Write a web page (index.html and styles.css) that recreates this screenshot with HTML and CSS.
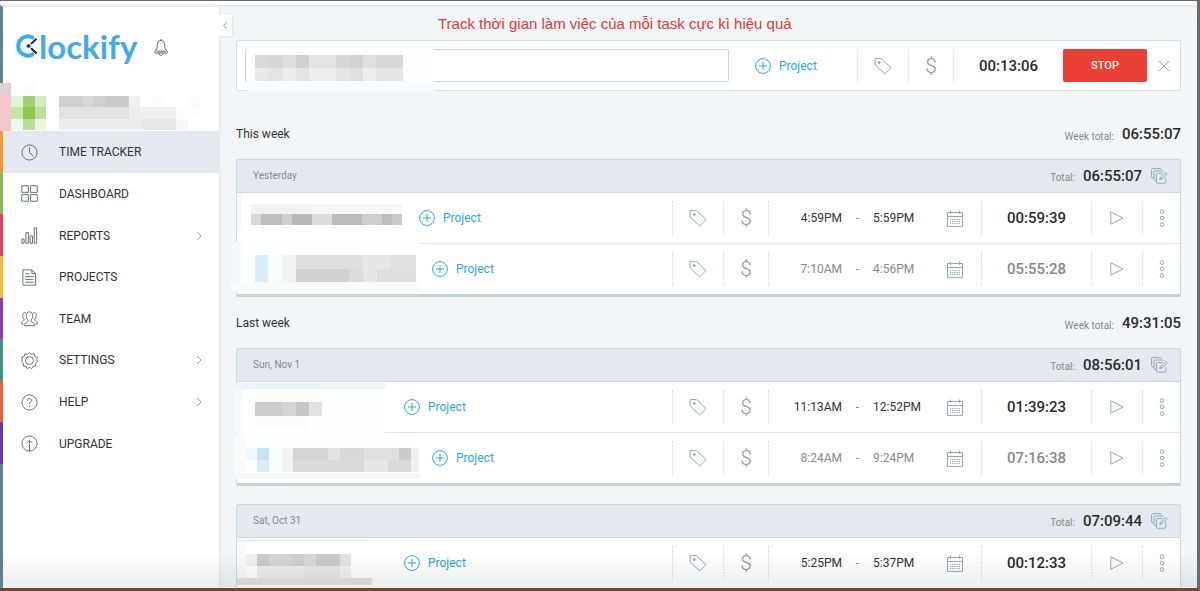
FILE: index.html
```html
<!DOCTYPE html>
<html lang="vi">
<head>
  <meta charset="UTF-8">
  <title>Clockify - Time Tracker</title>
  <link rel="stylesheet" href="styles.css">
</head>
<body>
<!-- icons -->
<svg class="sprite" aria-hidden="true">
  <symbol id="i-plus" viewBox="0 0 16 16"><circle cx="8" cy="8" r="7.4"/><path d="M8 4v8M4 8h8"/></symbol>
  <symbol id="i-tag" viewBox="0 0 18 18"><path d="M1 1.6h6.6l9.4 9-6.3 6.2L1.2 8z"/><circle cx="5.2" cy="5.6" r="1" fill="currentColor"/></symbol>
  <symbol id="i-cal" viewBox="0 0 16 17"><path d="M.5 2.5h15v13.9H.5zM.5 6.5h15M3.5.5v3.4M12.5.5v3.4"/><path d="M3 9.5h10M3 11.5h10M3 13.5h10" stroke-dasharray="1.2 1"/></symbol>
  <symbol id="i-play" viewBox="0 0 14 14"><path d="M.8.8 13 7 .8 13.2z"/></symbol>
  <symbol id="i-dots" viewBox="0 0 6 18"><circle cx="3" cy="2.6" r="1.8"/><circle cx="3" cy="9" r="1.8"/><circle cx="3" cy="15.6" r="1.8"/></symbol>
  <symbol id="i-copy" viewBox="0 0 17 16"><path d="M3 9.8H1.6a1 1 0 0 1-1-1V1.6a1 1 0 0 1 1-1H9a1 1 0 0 1 1 1M5.4 12.4H4a1 1 0 0 1-1-1V4a1 1 0 0 1 1-1h7.4a1 1 0 0 1 1 1M11.5 5.6H6.4a1 1 0 0 0-1 1v7.6a1 1 0 0 0 1 1h7.4a1 1 0 0 0 1-1V9.4M8.8 11.6l.5-2 5.4-5.3 1.5 1.5-5.4 5.3zM8.8 11.6l2-2"/></symbol>
  <symbol id="i-right" viewBox="0 0 6 10"><path d="M1 1l4 4-4 4"/></symbol>
</svg>

<div class="window">
  <aside class="sidebar">
    <div class="brand">
      <a class="logo" href="#" aria-label="Clockify">
        <svg width="22" height="24" viewBox="0 0 22 24" aria-hidden="true">
          <path class="ring" d="M15.5 3.6A9.6 9.6 0 1 0 15.5 20.4"/>
          <path class="hands" d="M14.6 9.4 19 5.2M14.6 14.8 19 19"/><circle cx="11.6" cy="12" r="1.9" fill="#222"/>
        </svg><span>lockify</span>
      </a>
      <button class="bell" aria-label="Notifications">
        <svg width="14" height="18" viewBox="0 0 14 18"><path d="M7 1.2c-2.6.5-3.6 2.500-3.700 5.300-.1 2.800-.8 4.500-2.400 5.700-.5.500-.3 1.800.4 1.800h11.400c.7 0 .9-1.300.4-1.800-1.600-1.200-2.300-2.900-2.400-5.700C10.600 3.700 9.600 1.700 7 1.200zM7 0v1.200M2.500 12.200h9M5 14.300c.2 3 3.800 3 4 0"/></svg>
      </button>
    </div>
    <!-- account, hidden -->
    <svg class="user" height="48" shape-rendering="crispEdges" aria-hidden="true">
      <rect width="11" height="13" fill="#decfd1"/><rect y="13" width="11" height="35" fill="#f2c6cb"/>
      <rect x="23" y="1" width="12" height="11" fill="#fbfbfa"/>
      <rect x="11" y="13" width="12" height="11" fill="#def4d3"/><rect x="23" y="13" width="12" height="11" fill="#a3cf70"/><rect x="35" y="13" width="11" height="11" fill="#d6ebc3"/>
      <rect x="11" y="24" width="12" height="12" fill="#c5e5a8"/><rect x="23" y="24" width="12" height="12" fill="#8fc654"/><rect x="35" y="24" width="11" height="12" fill="#bfdf9d"/>
      <rect x="11" y="36" width="12" height="11" fill="#eef8e9"/><rect x="23" y="36" width="12" height="11" fill="#b9dc98"/><rect x="35" y="36" width="11" height="11" fill="#eaf5e3"/>
      <rect x="59" y="13" width="70" height="11" fill="#d0d0d0"/><rect x="82" y="13" width="12" height="11" fill="#d7d7d7"/><rect x="105" y="13" width="23" height="11" fill="#cacaca"/><rect x="129" y="13" width="11" height="11" fill="#efefed"/>
      <rect x="59" y="24" width="70" height="12" fill="#e2e2e2"/><rect x="129" y="24" width="11" height="12" fill="#eeeeec"/><rect x="140" y="24" width="36" height="12" fill="#f0f0f0"/><rect x="176" y="24" width="26" height="11" fill="#fbfcfb"/>
      <rect x="59" y="36" width="82" height="11" fill="#ededec"/><rect x="141" y="36" width="35" height="11" fill="#e8e8e8"/><rect x="176" y="36" width="12" height="11" fill="#f8f8f8"/>
      <rect x="188" y="13" width="12" height="11" fill="#fafbfa"/><rect x="152" y="13" width="12" height="11" fill="#fafbfb"/>
    </svg>
    <nav>
      <ul class="menu">
        <li class="active c1"><a href="#"><svg viewBox="0 0 18 18"><circle cx="9" cy="9" r="8"/><path d="M9 3.500V9l4 4"/></svg>TIME TRACKER</a></li>
        <li class="c2"><a href="#"><svg viewBox="0 0 18 18"><path d="M.8.8h7v7h-7zM10.200.8h7v7h-7zM.8 10.200h7v7h-7zM10.200 10.200h7v7h-7z"/></svg>DASHBOARD</a></li>
        <li class="c3"><a href="#"><svg viewBox="0 0 18 18"><path d="M.9 12.700h2.400v4.500H.9zM5.200 6h2.600v11.200H5.200zM9.600 9.500h2.600v7.700H9.600zM14 .9h2.600v16.300H14z"/></svg>REPORTS<svg class="go"><use href="#i-right"/></svg></a></li>
        <li class="c4"><a href="#"><svg viewBox="0 0 18 18"><path d="M2 .9h9.500l4 4v12.200H2zM11.500.9v4h4M4.500 5h4.500M4.500 8h9M4.500 11h9M4.500 14h9"/></svg>PROJECTS</a></li>
        <li class="c5"><a href="#"><svg viewBox="0 0 18 18"><path d="M9 2C4.500 2 5 8.500 7.400 10.800c.3 1.400-.4 2.200-2 2.700-1.600.6-2 1.600-2 3.100h11.200c0-1.500-.4-2.500-2-3.100-1.600-.5-2.300-1.300-2-2.700C13 8.500 13.500 2 9 2zM5 2.800C1.200 2 .8 6.500 3.300 9.500c.2 1.500-.4 2-1.300 2.500-1 .5-1.400 1.300-1.400 2.800h2M13 2.800c3.800-.8 4.200 3.700 1.700 6.700-.2 1.500.4 2 1.300 2.500 1 .5 1.400 1.300 1.400 2.800h-2"/></svg>TEAM</a></li>
        <li class="c6"><a href="#"><svg viewBox="0 0 18 18"><circle cx="9" cy="9" r="4.200"/><path d="M9 .7l2 1.900 2.800-.7.8 2.800 2.700.9-.7 2.700L17.400 10l-2 2 .3 2.800-2.800.3-1.300 2.400L9 16.300l-2.600 1.200-1.300-2.400-2.800-.3.300-2.800-2-2 .8-1.700L.7 5.600l2.700-.9.800-2.800L7 2.600z"/></svg>SETTINGS<svg class="go"><use href="#i-right"/></svg></a></li>
        <li class="c7"><a href="#"><svg viewBox="0 0 18 18"><circle cx="9" cy="9" r="8"/><path d="M6.900 7c0-3 4.200-2.800 4.200-.2C11.100 8.700 9 8.500 9 10.800M9 12.200v1.200"/></svg>HELP<svg class="go"><use href="#i-right"/></svg></a></li>
        <li class="c8"><a href="#"><svg viewBox="0 0 18 18"><circle cx="9" cy="9" r="8"/><path d="M9 17V6M5.800 8.800 9 5.600l3.200 3.200"/></svg>UPGRADE</a></li>
      </ul>
    </nav>
    <div class="rest"></div>
    <button class="collapse" aria-label="Collapse menu"><svg width="4" height="7" viewBox="0 0 4 7"><path d="M3.500.5l-3 3 3 3"/></svg></button>
  </aside>

  <main>
    <h1>Track thời gian làm việc của mỗi task cực kì hiệu quả</h1>

    <form class="tracker">
      <div class="what">
        <input type="text" aria-label="What are you working on?">
        <svg width="187" height="51" shape-rendering="crispEdges" aria-hidden="true">
          <rect width="187" height="41" fill="#fdfefe"/><rect y="41" width="187" height="10" fill="#f8fbfd"/>
          <rect x="8" y="14" width="13" height="13" fill="#d9d9d9"/><rect x="21" y="14" width="15" height="13" fill="#d6d6d6"/><rect x="36" y="14" width="13" height="13" fill="#dedede"/><rect x="49" y="14" width="13" height="13" fill="#d0d0d0"/><rect x="62" y="14" width="27" height="13" fill="#e4e4e4"/><rect x="89" y="14" width="14" height="13" fill="#d6d6d6"/><rect x="103" y="14" width="13" height="13" fill="#d2d2d2"/><rect x="116" y="14" width="13" height="13" fill="#e0e0e0"/><rect x="129" y="14" width="27" height="13" fill="#d8d8d8"/>
          <rect x="8" y="27" width="13" height="13" fill="#e9e9e9"/><rect x="21" y="27" width="15" height="13" fill="#e3e3e3"/><rect x="36" y="27" width="13" height="13" fill="#ebeeed"/><rect x="49" y="27" width="13" height="13" fill="#e3e3e3"/><rect x="62" y="27" width="27" height="13" fill="#eee"/><rect x="89" y="27" width="14" height="13" fill="#e5e5e5"/><rect x="103" y="27" width="13" height="13" fill="#dfdfdf"/><rect x="116" y="27" width="13" height="13" fill="#ebefee"/><rect x="129" y="27" width="27" height="13" fill="#e4e4e4"/>
        </svg>
      </div>
      <button type="button" class="project"><svg><use href="#i-plus"/></svg>Project</button>
      <button type="button" class="cell tag" aria-label="Tags"><svg><use href="#i-tag"/></svg></button>
      <button type="button" class="cell money" aria-label="Billable">$</button>
      <span class="cell now">00:13:06</span>
      <button type="button" class="stop">STOP</button>
      <button type="button" class="discard" aria-label="Discard"><svg width="12" height="12" viewBox="0 0 12 12"><path d="M1 1l10 10M11 1L1 11"/></svg></button>
    </form>

    <section class="week">
      <div class="week-head"><h2>This week</h2><span>Week total:</span><b>06:55:07</b></div>
      <div class="day">
        <div class="day-head"><h3>Yesterday</h3><span>Total:</span><b>06:55:07</b><button aria-label="Bulk edit"><svg><use href="#i-copy"/></svg></button></div>
        <div class="entry">
          <svg class="desc" width="182" height="50" shape-rendering="crispEdges" aria-hidden="true">
            <rect width="4" height="38" fill="#f5f8fa"/><rect x="14" y="11" width="61" height="10" fill="#f2f2f2"/><rect x="75" y="11" width="90" height="10" fill="#f7f7f7"/>
            <rect x="14" y="21" width="10" height="11" fill="#d8d8d8"/><rect x="24" y="21" width="21" height="11" fill="#bdbdbd"/><rect x="45" y="21" width="10" height="11" fill="#d0d0d0"/><rect x="55" y="21" width="20" height="11" fill="#b9b9b9"/><rect x="75" y="21" width="20" height="11" fill="#dcdcdc"/><rect x="95" y="21" width="30" height="11" fill="#bcbcbc"/><rect x="125" y="21" width="20" height="11" fill="#cecece"/><rect x="145" y="21" width="10" height="11" fill="#bdbdbd"/><rect x="155" y="21" width="10" height="11" fill="#cacaca"/>
          </svg>
          <button class="project"><svg><use href="#i-plus"/></svg>Project</button>
          <button class="cell tag" aria-label="Tags"><svg><use href="#i-tag"/></svg></button>
          <button class="cell money" aria-label="Billable">$</button>
          <div class="cell time"><input class="from" aria-label="Start" value="4:59PM"><i>-</i><input aria-label="End" value="5:59PM"><button aria-label="Date"><svg><use href="#i-cal"/></svg></button></div>
          <span class="cell sum">00:59:39</span>
          <button class="cell play" aria-label="Continue"><svg><use href="#i-play"/></svg></button>
          <button class="cell more" aria-label="More"><svg><use href="#i-dots"/></svg></button>
        </div>
        <div class="entry muted">
          <svg class="desc" width="195" height="50" shape-rendering="crispEdges" aria-hidden="true">
            <rect x="-7" y="-2" width="190" height="49" fill="#fdfefe"/><rect x="-7" y="-2" width="11" height="40" fill="#f5f8fa"/><rect x="-7" y="38" width="190" height="9" fill="#f8fafb"/>
            <rect x="18" y="11" width="13" height="27" fill="#d8edf7"/><rect x="31" y="11" width="14" height="27" fill="#f8fdfe"/><rect x="45" y="11" width="14" height="27" fill="#f3f3f3"/>
            <rect x="59" y="11" width="67" height="14" fill="#dedede"/><rect x="126" y="11" width="27" height="14" fill="#e6e6e6"/><rect x="153" y="11" width="26" height="14" fill="#e0e0e0"/>
            <rect x="59" y="25" width="53" height="13" fill="#d0d0d0"/><rect x="112" y="25" width="14" height="13" fill="#dbdbdb"/><rect x="126" y="25" width="14" height="13" fill="#e6e6e6"/><rect x="140" y="25" width="39" height="13" fill="#dedede"/>
          </svg>
          <button class="project"><svg><use href="#i-plus"/></svg>Project</button>
          <button class="cell tag" aria-label="Tags"><svg><use href="#i-tag"/></svg></button>
          <button class="cell money" aria-label="Billable">$</button>
          <div class="cell time"><input class="from" aria-label="Start" value="7:10AM"><i>-</i><input aria-label="End" value="4:56PM"><button aria-label="Date"><svg><use href="#i-cal"/></svg></button></div>
          <span class="cell sum">05:55:28</span>
          <button class="cell play" aria-label="Continue"><svg><use href="#i-play"/></svg></button>
          <button class="cell more" aria-label="More"><svg><use href="#i-dots"/></svg></button>
        </div>
      </div>
    </section>

    <section class="week">
      <div class="week-head"><h2>Last week</h2><span>Week total:</span><b>49:31:05</b></div>
      <div class="day">
        <div class="day-head"><h3>Sun, Nov 1</h3><span>Total:</span><b>08:56:01</b><button aria-label="Bulk edit"><svg><use href="#i-copy"/></svg></button></div>
        <div class="entry">
          <svg class="desc" width="167" height="50" shape-rendering="crispEdges" aria-hidden="true">
            <rect x="-2" y="1" width="150" height="50" fill="#fdfefe"/><rect x="-2" y="1" width="150" height="6" fill="#eff3f6"/><rect x="-2" y="7" width="7" height="44" fill="#f5f8fa"/><rect x="18" y="8" width="66" height="12" fill="#fbfbfa"/><rect x="18" y="34" width="54" height="13" fill="#fbfbfb"/>
            <rect x="18" y="20" width="27" height="14" fill="#ccc"/><rect x="45" y="20" width="14" height="14" fill="#d4d4d4"/><rect x="59" y="20" width="13" height="14" fill="#c7c7c7"/><rect x="72" y="20" width="13" height="14" fill="#e2e2e2"/>
          </svg>
          <button class="project"><svg><use href="#i-plus"/></svg>Project</button>
          <button class="cell tag" aria-label="Tags"><svg><use href="#i-tag"/></svg></button>
          <button class="cell money" aria-label="Billable">$</button>
          <div class="cell time"><input class="from" aria-label="Start" value="11:13AM"><i>-</i><input aria-label="End" value="12:52PM"><button aria-label="Date"><svg><use href="#i-cal"/></svg></button></div>
          <span class="cell sum">01:39:23</span>
          <button class="cell play" aria-label="Continue"><svg><use href="#i-play"/></svg></button>
          <button class="cell more" aria-label="More"><svg><use href="#i-dots"/></svg></button>
        </div>
        <div class="entry muted">
          <svg class="desc" width="195" height="50" shape-rendering="crispEdges" aria-hidden="true">
            <rect x="-3" y="1" width="186" height="45" fill="#fdfefe"/><rect x="-3" y="1" width="12" height="39" fill="#f9fbfb"/><rect x="-3" y="40" width="186" height="6" fill="#f5f7f9"/>
            <rect x="9" y="15" width="11" height="12" fill="#eef8fd"/><rect x="20" y="15" width="12" height="12" fill="#c6e3f1"/><rect x="20" y="27" width="12" height="12" fill="#d8edf7"/><rect x="32" y="15" width="13" height="24" fill="#f6fdfe"/><rect x="45" y="15" width="11" height="24" fill="#f3f3f3"/>
            <rect x="56" y="15" width="35" height="12" fill="#d4d4d4"/><rect x="91" y="15" width="12" height="12" fill="#e2e2e2"/><rect x="103" y="15" width="24" height="12" fill="#d8d8d8"/><rect x="127" y="15" width="35" height="12" fill="#dfdfdf"/><rect x="162" y="15" width="12" height="12" fill="#cbcbcb"/>
            <rect x="56" y="27" width="71" height="12" fill="#dadada"/><rect x="127" y="27" width="24" height="12" fill="#e6e6e6"/><rect x="151" y="27" width="23" height="12" fill="#d9d9d9"/><rect x="174" y="15" width="8" height="24" fill="#f0f0f0"/>
          </svg>
          <button class="project"><svg><use href="#i-plus"/></svg>Project</button>
          <button class="cell tag" aria-label="Tags"><svg><use href="#i-tag"/></svg></button>
          <button class="cell money" aria-label="Billable">$</button>
          <div class="cell time"><input class="from" aria-label="Start" value="8:24AM"><i>-</i><input aria-label="End" value="9:24PM"><button aria-label="Date"><svg><use href="#i-cal"/></svg></button></div>
          <span class="cell sum">07:16:38</span>
          <button class="cell play" aria-label="Continue"><svg><use href="#i-play"/></svg></button>
          <button class="cell more" aria-label="More"><svg><use href="#i-dots"/></svg></button>
        </div>
      </div>
      <div class="day">
        <div class="day-head"><h3>Sat, Oct 31</h3><span>Total:</span><b>07:09:44</b><button aria-label="Bulk edit"><svg><use href="#i-copy"/></svg></button></div>
        <div class="entry">
          <svg class="desc" width="167" height="50" shape-rendering="crispEdges" aria-hidden="true">
            <rect y="1" width="135" height="3" fill="#eef1f5"/><rect y="4" width="9" height="36" fill="#f8fafb"/><rect x="9" y="16" width="11" height="12" fill="#f1f1f1"/>
            <rect x="20" y="16" width="12" height="12" fill="#cbcbcb"/><rect x="32" y="16" width="23" height="12" fill="#d4d4d4"/><rect x="55" y="16" width="12" height="12" fill="#cecece"/><rect x="67" y="16" width="12" height="12" fill="#d8d8d8"/><rect x="79" y="16" width="24" height="12" fill="#cacaca"/><rect x="103" y="16" width="11" height="12" fill="#e3e3e3"/>
            <rect x="20" y="28" width="47" height="12" fill="#ebebeb"/><rect x="67" y="28" width="36" height="12" fill="#e6e6e6"/><rect x="103" y="28" width="11" height="12" fill="#f1f1f1"/><rect y="40" width="135" height="7" fill="#e7e2dd"/>
          </svg>
          <button class="project"><svg><use href="#i-plus"/></svg>Project</button>
          <button class="cell tag" aria-label="Tags"><svg><use href="#i-tag"/></svg></button>
          <button class="cell money" aria-label="Billable">$</button>
          <div class="cell time"><input class="from" aria-label="Start" value="5:25PM"><i>-</i><input aria-label="End" value="5:37PM"><button aria-label="Date"><svg><use href="#i-cal"/></svg></button></div>
          <span class="cell sum">00:12:33</span>
          <button class="cell play" aria-label="Continue"><svg><use href="#i-play"/></svg></button>
          <button class="cell more" aria-label="More"><svg><use href="#i-dots"/></svg></button>
        </div>
      </div>
    </section>
  </main>
  <div class="shade"></div>
</div>
</body>
</html>
```
FILE: styles.css
```css
*{box-sizing:border-box;}
body,ul,h1,h2,h3{margin:0;padding:0;}
ul{list-style:none;}
body{font:12px/16px Roboto,"Liberation Sans",sans-serif;color:#333;overflow:hidden;}
a{color:inherit;text-decoration:none;}
button,input{margin:0;padding:0;border:0;background:none;font:inherit;color:inherit;}
button{cursor:pointer;}
svg{display:block;flex:none;fill:none;stroke:currentColor;overflow:visible;}
svg[shape-rendering]{stroke:none;}
.sprite{position:absolute;width:0;height:0;}

.window{position:relative;display:flex;height:100vh;padding-top:4px;overflow:hidden;background:#fff;border-top:1px solid #6b6567;border-right:3px solid #6a6a6a;border-bottom:3px solid #6b4a2f;}
.window:after{content:"";position:absolute;left:0;right:0;bottom:-3px;height:1px;background:#333;}
.shade{position:absolute;left:3px;right:0;bottom:0;height:36px;background:linear-gradient(rgba(0,0,0,0),rgba(0,0,0,.07));border-bottom:1px solid #eee;pointer-events:none;}

/* sidebar */
.sidebar{position:relative;display:flex;flex-direction:column;flex:none;width:219px;background:#fff;box-shadow:1px 0 2px #dfe6eb;}
.brand,.rest{border-left:3px solid #5f8292;}
.brand{display:flex;align-items:center;height:78px;padding:2px 0 0 14px;border-top:2px solid #e8ecee;}
.logo{display:flex;align-items:center;color:#40a9f3;}
.logo span{font:700 33px/40px Lato,sans-serif;}
.logo .ring{stroke-width:4;stroke-linecap:round;}
.logo .hands{stroke:#222;stroke-width:2;stroke-linecap:round;}
.bell{padding-top:4px;margin-left:17px;color:#566066;}
.user{width:100%;}
.menu{display:grid;grid-template-rows:repeat(8,1fr);height:333px;}
.menu li{border-left:3px solid;}
.menu a{display:flex;align-items:center;height:100%;padding:1px 17px 0 18px;color:#333;}
.menu a svg{width:17px;height:17px;margin-right:21px;color:#5d6b73;}
.menu a svg.go{width:6px;height:10px;margin:0 0 0 auto;color:#90a9b7;}
.menu .active{background:#e4e9f0;}
.menu .c1{border-color:#f79a2e;}
.menu .c2{border-color:#84bd4b;}
.menu .c3{border-color:#e2405f;}
.menu .c4{border-color:#f5bd34;}
.menu .c5{border-color:#9436b0;}
.menu .c6{border-color:#439384;}
.menu .c7{border-color:#ea6036;}
.menu .c8{border-color:#6239b3;}
.rest{flex:1;}
.collapse{position:absolute;left:100%;top:10px;display:flex;align-items:center;justify-content:center;width:13px;height:21px;padding-right:2px;background:#fff;color:#8299a6;box-shadow:1px 1px 2px #dbe2e7;}

/* content */
main{flex:1;min-width:0;padding:0 16px 0 17px;background:#f2f6f8;border-top:2px solid #e4eaed;}
h1{height:33px;padding-left:202px;font:15px/33px "Liberation Sans",Arial,sans-serif;color:#e8372f;white-space:nowrap;}
h2,h3{font-size:12px;font-weight:400;}
b,.now,.sum{font-size:15px;font-weight:500;color:#2b2b2b;}

.tracker{display:flex;align-items:center;height:51px;padding-left:8px;background:#fff;border:1px solid #d6e0e6;border-radius:2px;}
.what{position:relative;flex:1;height:33px;}
.what input{width:100%;height:100%;padding-left:10px;border:1px solid #cbd5dd;border-radius:2px;}
.what svg{position:absolute;left:2px;top:-8px;}
.project{display:flex;align-items:center;color:#2ea3f0;}
.project svg{width:16px;height:16px;margin-right:8px;}
.tracker .project{width:128px;padding-left:26px;}
.cell{display:flex;align-items:center;justify-content:center;flex:none;height:34px;border-left:1px dotted #cfdbe1;}
.tag{width:51px;color:#90a9b7;}
.tag svg{width:18px;height:18px;}
.money{width:45px;font-size:21px;font-weight:300;color:#999;}
.now{width:110px;}
.stop{width:84px;height:33px;background:#ea4035;border-radius:2px;font-size:11px;font-weight:500;color:#fff;}
.discard{display:flex;justify-content:center;width:33px;color:#90a9b7;}

.week-head{display:flex;align-items:center;height:51px;}
.tracker + .week{margin-top:17px;}
.week-head h2,.day-head h3{flex:1;}
.week-head span,.day-head span{padding-top:4px;margin-right:8px;font-size:10px;color:#888;}
.week-head span{padding-top:6px;}
.day{border:1px solid #cdd9e0;border-bottom:3px solid #c4d2d9;border-radius:2px;}
.day + .day{margin-top:18px;}
.day-head{display:flex;align-items:center;height:33px;padding:0 12px 0 16px;background:#e4e9ef;border-bottom:1px solid #cdd9e0;}
.day-head h3{font-size:10px;color:#888;}
.day-head button{margin-left:9px;color:#90a9b7;}
.day-head button svg{width:17px;height:16px;}
.entry{display:flex;align-items:center;height:50px;background:#fff;}
.entry + .entry{height:51px;border-top:1px solid #dde5ea;}
.entry .tag{margin-left:auto;}
.time{justify-content:flex-start;width:213px;padding-left:13px;}
.time input{width:60px;height:24px;}
.time .from{text-align:right;}
.time i{width:31px;font-style:normal;text-align:center;color:#888;}
.time button{margin-left:14px;color:#90a9b7;}
.time button svg{width:16px;height:17px;}
.sum{width:110px;}
.play{width:51px;color:#90a9b7;}
.play svg{width:14px;height:14px;}
.more{width:38px;color:#90a9b7;}
.more svg{width:6px;height:18px;}
.muted .time input,.muted .sum{color:#888;}
```
